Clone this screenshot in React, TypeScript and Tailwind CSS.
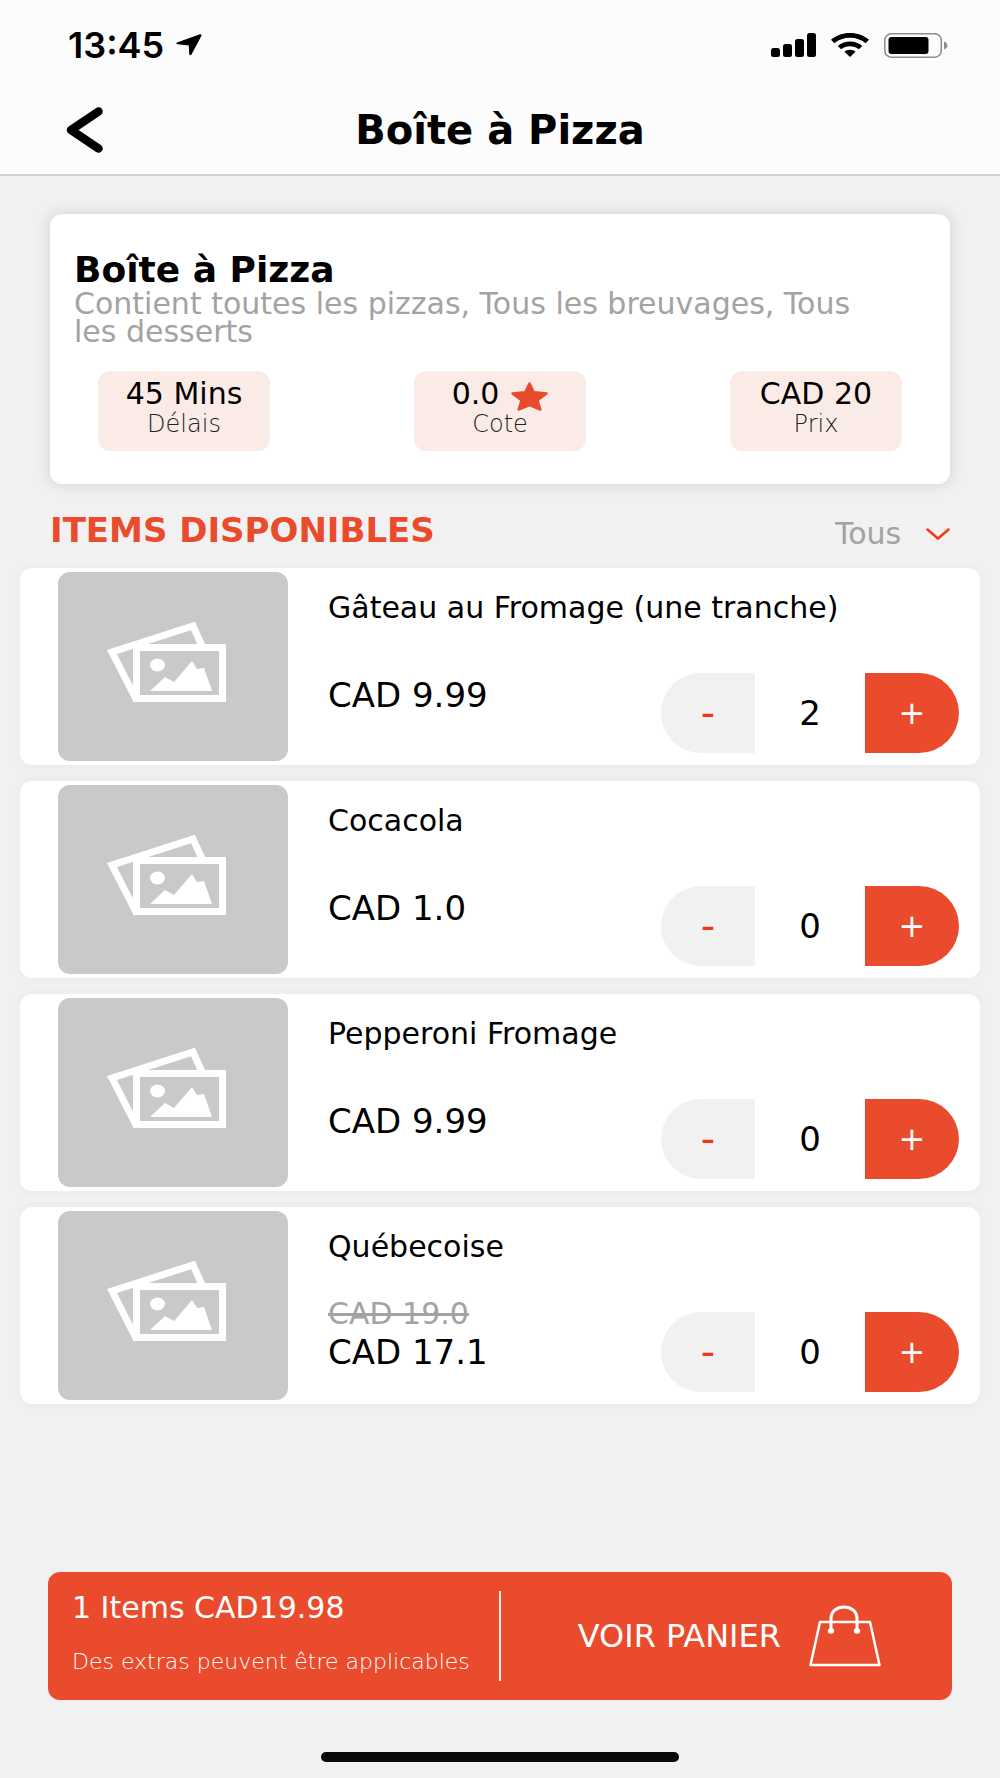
import { useState } from "react";

const items = [
  { name: "Gâteau au Fromage (une tranche)", price: "CAD 9.99", quantity: 2 },
  { name: "Cocacola", price: "CAD 1.0", quantity: 0 },
  { name: "Pepperoni Fromage", price: "CAD 9.99", quantity: 0 },
  { name: "Québecoise", price: "CAD 17.1", oldPrice: "CAD 19.0", quantity: 0 },
];

type Item = {
  name: string;
  price: string;
  oldPrice?: string;
  quantity: number;
};

function StatusBar() {
  return (
    <div className="flex items-center justify-between pl-[68px] pr-[52px] h-[90px]">
      <div className="flex items-center gap-3">
        <span className="font-['Inter',sans-serif] text-[36px] leading-8 font-semibold">13:45</span>
        <svg width="26" height="22" viewBox="0 0 26 22">
          <path d="M25 .5c.7.3.5 1 .2 1.700L15.500 20.400c-.6 1.200-2.300 1-2.300-.4L12.800 11.500 1.500 10.200C0 10-.200 8.900 1 8.400L23.200.600c.8-.3 1.400-.3 1.800-.1z" />
        </svg>
      </div>
      <div className="flex items-center gap-[15px]">
        <svg width="45" height="24" viewBox="0 0 45 24">
          <rect x="0" y="15" width="9" height="9" rx="2.500" />
          <rect x="12" y="11" width="9" height="13" rx="2.500" />
          <rect x="24" y="6" width="9" height="18" rx="2.500" />
          <rect x="36" y="0" width="9" height="24" rx="2.500" />
        </svg>
        <svg width="38" height="24" viewBox="0 0 38 24">
          <path d="M19 0C11.500 0 5 2.500 0 6.800l3.400 3.400C7.600 6.700 13 4.800 19 4.800s11.400 1.900 15.600 5.400L38 6.800C33 2.500 26.500 0 19 0z" />
          <path d="M19 8.500c-4.800 0-9 1.600-12.300 4.400l3.500 3.300c2.400-1.900 5.400-3 8.800-3s6.400 1.100 8.800 3l3.500-3.300C28 10.100 23.800 8.500 19 8.500z" />
          <path d="M19 16.800c-2.100 0-4 .7-5.500 1.900L19 24l5.500-5.300c-1.500-1.200-3.400-1.900-5.500-1.900z" />
        </svg>
        <svg width="64" height="25" viewBox="0 0 64 25">
          <rect x=".8" y=".8" width="56.500" height="23.400" rx="6.500" fill="none" stroke="#8c8c8c" strokeWidth="1.500" />
          <rect x="4.500" y="4" width="40" height="17" rx="3" />
          <path d="M60 8.500c2 .8 3.400 2.200 3.400 4s-1.400 3.200-3.400 4z" fill="#8c8c8c" />
        </svg>
      </div>
    </div>
  );
}

function Stat({ value, label, star }: { value: string; label: string; star?: boolean }) {
  return (
    <div className="w-[172px] h-20 pt-[9px] rounded-xl bg-[#fbebe7] text-center">
      <p className="flex items-center justify-center gap-3 h-7 text-[30px] leading-7">
        {value}
        {star && (
          <svg width="37" height="29" viewBox="0 0 37 29" className="mt-1">
            <path
              d="M18.500 1.500l4.300 8.800 12.700 1.200-9 6.800 2.800 9.200-10.800-4.300-10.800 4.300 2.800-9.200-9-6.800 12.700-1.200z"
              fill="#e94b2c"
              stroke="#e94b2c"
              strokeWidth="2.500"
              strokeLinejoin="round"
            />
          </svg>
        )}
      </p>
      <p className="text-[24px] leading-8 font-light text-[#222]">{label}</p>
    </div>
  );
}

function Placeholder() {
  return (
    <div className="flex items-center justify-center w-[230px] h-[189px] shrink-0 pr-3 pb-2 rounded-xl bg-[#c9c9c9]">
      <svg width="120" height="82" viewBox="0 0 120 82" fill="none" stroke="#fff">
        <path d="M96 26L86 4 5 30l25 49" strokeWidth="7" />
        <rect x="29.500" y="25.500" width="86" height="51" strokeWidth="7" />
        <ellipse cx="50.500" cy="43" rx="7.500" ry="6.500" fill="#fff" stroke="none" />
        <path d="M43 69l15-14 9 5 18-21 5 8 7-1 8 23z" fill="#fff" stroke="none" />
      </svg>
    </div>
  );
}

function ItemRow({ item }: { item: Item }) {
  const [quantity, setQuantity] = useState(item.quantity);

  return (
    <li className="flex h-[197px] pl-[38px] pr-[21px] pt-1 rounded-xl bg-white shadow-[0_0_12px_rgba(120,40,40,0.04)]">
      <Placeholder />
      <div className="flex flex-col flex-1 pl-10 pt-5">
        <h3 className="text-[30px] leading-8">{item.name}</h3>
        <div className="flex flex-1 justify-between">
          <div className="flex flex-col justify-center">
            {item.oldPrice && (
              <s className="text-[30px] leading-9 text-[#a3a3a3]">{item.oldPrice}</s>
            )}
            <p className="text-[34px] leading-10">{item.price}</p>
          </div>
          <div className="flex items-center self-end mb-3 h-20">
            <button
              aria-label="Retirer"
              className="w-[94px] h-20 rounded-l-full bg-[#f1f1f1] text-[40px] text-[#f03a17]"
              onClick={() => setQuantity(Math.max(0, quantity - 1))}
            >
              -
            </button>
            <span className="w-[110px] text-center text-[34px]">{quantity}</span>
            <button
              aria-label="Ajouter"
              className="w-[94px] h-20 rounded-r-full bg-[#e94b2c] text-[32px] text-white"
              onClick={() => setQuantity(quantity + 1)}
            >
              +
            </button>
          </div>
        </div>
      </div>
    </li>
  );
}

export default function App() {
  return (
    <div className="flex flex-col min-h-screen bg-[#f1f1f1] font-['DejaVu_Sans',sans-serif] text-black">
      <header className="h-[176px] bg-[#fcfcfc] border-b-2 border-[#d2d2d2]">
        <StatusBar />
        <div className="grid grid-cols-[1fr_auto_1fr] items-center h-20 px-[66px]">
          <button aria-label="Retour" className="justify-self-start">
            <svg width="38" height="46" viewBox="0 0 38 46">
              <path d="M32.500 4.500L5 23l27.500 18.500" fill="none" stroke="#000" strokeWidth="8.500" strokeLinecap="round" strokeLinejoin="round" />
            </svg>
          </button>
          <h1 className="text-[40px] leading-[48px] font-bold">Boîte à Pizza</h1>
        </div>
      </header>

      <main className="pt-[38px]">
        <section className="mx-[50px] h-[270px] px-6 pt-9 rounded-xl bg-white shadow-[0_0_16px_rgba(0,0,0,0.14)]">
          <h2 className="text-[36px] leading-10 font-bold">Boîte à Pizza</h2>
          <p className="pr-10 text-[30px] leading-7 text-[#a3a3a3]">
            Contient toutes les pizzas, Tous les breuvages, Tous les desserts
          </p>
          <div className="flex justify-between px-6 pt-[25px]">
            <Stat value="45 Mins" label="Délais" />
            <Stat value="0.0" label="Cote" star />
            <Stat value="CAD 20" label="Prix" />
          </div>
        </section>

        <div className="flex items-center justify-between h-[84px] pt-4 px-[50px]">
          <h2 className="pb-2 text-[34px] leading-10 font-bold text-[#e94b2c]">ITEMS DISPONIBLES</h2>
          <div className="flex items-center gap-6">
            <select aria-label="Filtrer" className="appearance-none bg-transparent text-[30px] leading-9 text-[#a3a3a3]">
              <option>Tous</option>
            </select>
            <svg width="24" height="13" viewBox="0 0 24 13">
              <path d="M1.500 1.500L12 10.500l10.500-9" fill="none" stroke="#f03a17" strokeWidth="2.500" strokeLinecap="round" />
            </svg>
          </div>
        </div>

        <ul className="flex flex-col gap-4 px-5">
          {items.map((item) => (
            <ItemRow key={item.name} item={item} />
          ))}
        </ul>
      </main>

      <footer className="mt-auto px-12 pb-4">
        <div className="grid grid-cols-[1fr_2px_1fr] items-center h-32 rounded-xl bg-[#e94b2c] text-white">
          <div className="flex flex-col gap-5 pl-6 pb-1 whitespace-nowrap">
            <p className="text-[30px] leading-9">1 Items CAD19.98</p>
            <p className="text-[22px] leading-8 font-light">Des extras peuvent être applicables</p>
          </div>
          <div className="h-[90px] bg-white/90" />
          <button className="flex items-center justify-end gap-7 pr-[71px] text-[32px]">
            VOIR PANIER
            <svg width="72" height="62" viewBox="0 0 72 62" fill="none" stroke="#fff" strokeWidth="2.500" strokeLinejoin="round">
              <path d="M11 17h50l9.500 43h-69z" />
              <path d="M22 26V14C22 6 28 2 35 2s13 4 13 12v12" strokeWidth="3" />
              <ellipse cx="22" cy="26" rx="2" ry="1.500" fill="#fff" />
              <ellipse cx="48" cy="26" rx="2" ry="1.500" fill="#fff" />
            </svg>
          </button>
        </div>
        <div className="mx-auto mt-[52px] w-[358px] h-[10px] rounded-full bg-[#0a0a0a]" />
      </footer>
    </div>
  );
}
